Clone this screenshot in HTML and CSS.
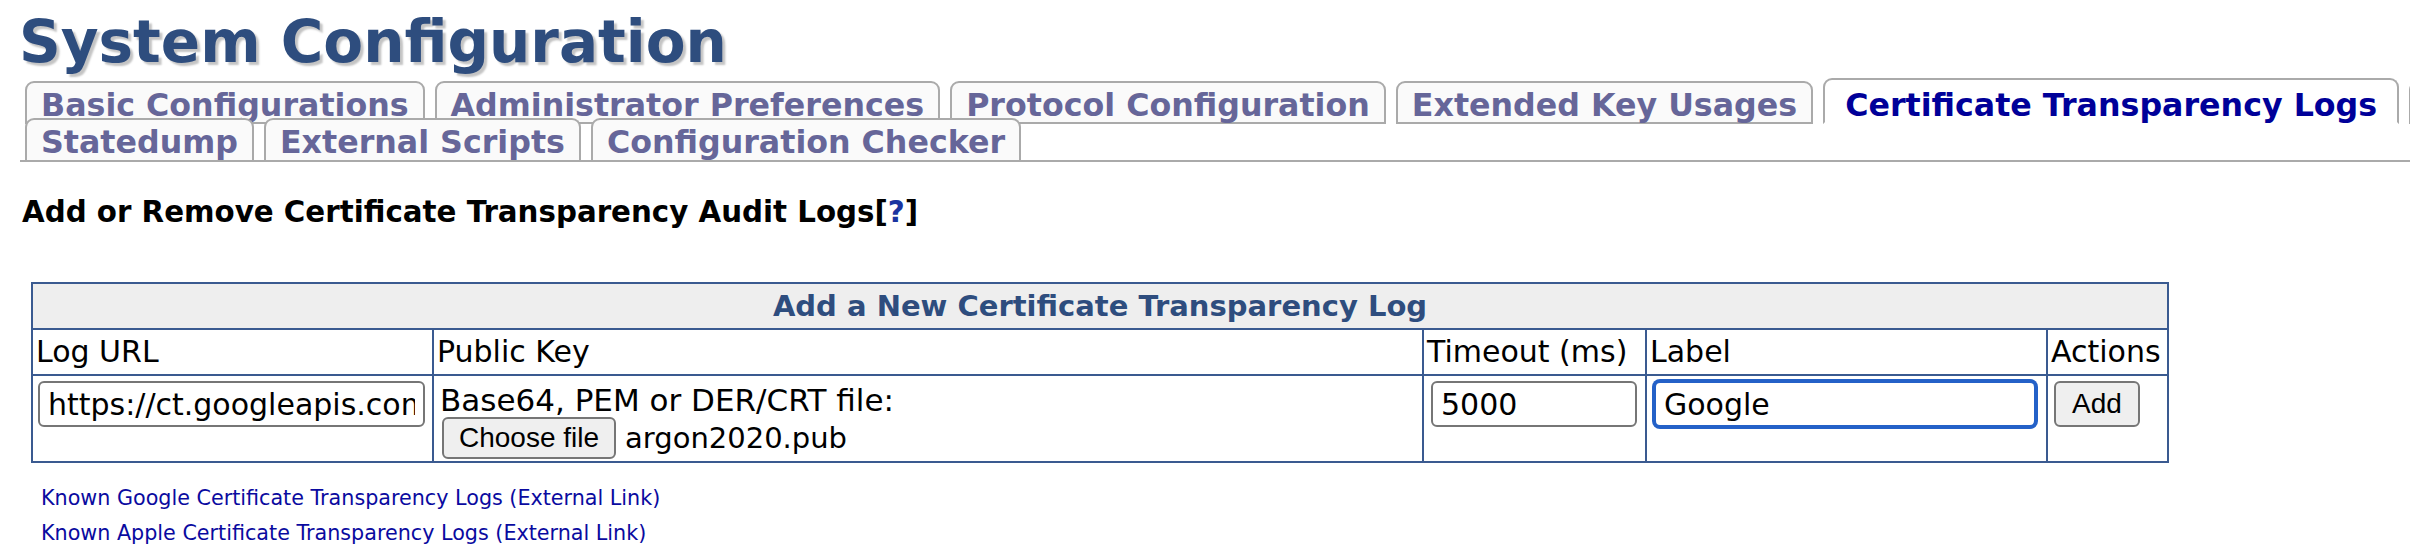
FILE: index.html
```html
<!DOCTYPE html>
<html lang="en">
<head>
<meta charset="utf-8">
<title>System Configuration</title>
<link rel="stylesheet" href="styles.css">
</head>
<body>
<h1 class="title">System Configuration</h1>
<nav class="tabs">
  <div class="tabrow first">
    <a class="tab" href="#">Basic Configurations</a>
    <a class="tab" href="#">Administrator Preferences</a>
    <a class="tab" href="#">Protocol Configuration</a>
    <a class="tab" href="#">Extended Key Usages</a>
    <a class="tab active" href="#">Certificate Transparency Logs</a>
    <a class="tab more" href="#" aria-label="Custom Certificate Extensions"></a>
  </div>
  <div class="tabrow second">
    <a class="tab" href="#">Statedump</a>
    <a class="tab" href="#">External Scripts</a>
    <a class="tab" href="#">Configuration Checker</a>
  </div>
</nav>

<h2 class="section">Add or Remove Certificate Transparency Audit Logs[<a class="help" href="#">?</a>]</h2>

<table class="ctlogs">
  <colgroup>
    <col class="c-url">
    <col class="c-key">
    <col class="c-timeout">
    <col class="c-label">
    <col class="c-actions">
  </colgroup>
  <thead>
    <tr><th class="caption" colspan="5">Add a New Certificate Transparency Log</th></tr>
    <tr class="colheads">
      <th>Log URL</th>
      <th>Public Key</th>
      <th>Timeout (ms)</th>
      <th>Label</th>
      <th>Actions</th>
    </tr>
  </thead>
  <tbody>
    <tr class="datarow">
      <td class="d-url"><input class="field url" type="text" value="https://ct.googleapis.com/logs/argon2020/"></td>
      <td class="d-key">
        <div class="hint">Base64, PEM or DER/CRT file:</div>
        <div class="file"><button class="btn choose" type="button">Choose file</button><span class="fname">argon2020.pub</span></div>
      </td>
      <td class="d-timeout"><input class="field timeout" type="text" value="5000"></td>
      <td class="d-label"><input class="field label focused" type="text" value="Google"></td>
      <td class="d-actions"><button class="btn add" type="button">Add</button></td>
    </tr>
  </tbody>
</table>

<div class="links">
  <a href="#">Known Google Certificate Transparency Logs (External Link)</a>
  <a href="#">Known Apple Certificate Transparency Logs (External Link)</a>
</div>
</body>
</html>
```
FILE: styles.css
```css
html, body {
  overflow: hidden;
}
body {
  margin: 0;
  padding: 6px 0 0 19px;
  font-family: "DejaVu Sans", Verdana, sans-serif;
  color: #000;
  background: #fff;
}

.title {
  margin: 0;
  font-size: 58px;
  line-height: 72px;
  font-weight: bold;
  color: #2e4d7e;
  text-shadow: 3px 3px 2px #c4c4c4;
  white-space: nowrap;
}

.tabs {
  margin-left: 1px;
  padding-left: 5px;
  border-bottom: 2px solid #aaaaaa;
  overflow: hidden;
}
.tabrow {
  display: flex;
  align-items: flex-end;
  gap: 10px;
  white-space: nowrap;
}
.tabrow.second {
  margin-top: -6px;
  position: relative;
}
.tab {
  flex: 0 0 auto;
  display: block;
  border: 2px solid #aaaaaa;
  border-radius: 9px 9px 0 0;
  background: #fafafa;
  color: #666699;
  font-size: 31.7px;
  font-weight: bold;
  line-height: 34px;
  padding: 5px 14px 0;
  text-decoration: none;
}
.tab.active {
  padding: 8px 20px 0;
  background: #fff;
  color: #000099;
  border-bottom-color: #fff;
}
.tab.more {
  width: 300px;
  height: 34px;
}
.tabrow.second .tab {
  border-bottom: 0;
  padding-bottom: 1px;
}

.section {
  margin: 34px 0 0 3px;
  font-size: 29.3px;
  line-height: 32px;
  font-weight: bold;
}
.help {
  color: #1a34a0;
  text-decoration: none;
}

.ctlogs {
  margin: 54px 0 0 12px;
  table-layout: fixed;
  width: 2138px;
  border-collapse: separate;
  border-spacing: 0;
  border-top: 2px solid #3a5a90;
  border-left: 2px solid #3a5a90;
}
.c-url { width: 401px; }
.c-key { width: 990px; }
.c-timeout { width: 223px; }
.c-label { width: 401px; }
.c-actions { width: 121px; }

.ctlogs th,
.ctlogs td {
  box-sizing: border-box;
  border-right: 2px solid #3a5a90;
  border-bottom: 2px solid #3a5a90;
  text-align: left;
  font-weight: normal;
  font-size: 30px;
  vertical-align: top;
}
.ctlogs th.caption {
  text-align: center;
  font-weight: bold;
  font-size: 29px;
  line-height: 44px;
  padding: 0;
  background: #eeeeee;
  color: #2e4d7e;
}
.colheads th {
  line-height: 44px;
  padding: 0 3px;
  white-space: nowrap;
  overflow: hidden;
}
.datarow td {
  padding: 5px 0 0 5px;
  height: 87px;
}
.datarow td.d-key {
  padding: 7px 0 0 6px;
}

.field {
  box-sizing: border-box;
  display: block;
  height: 46px;
  border: 2px solid #767676;
  border-radius: 6px;
  padding: 0 8px;
  font-family: "DejaVu Sans", Verdana, sans-serif;
  font-size: 30px;
  color: #000;
  background: #fff;
  margin: 0;
}
.field.url { width: 387px; }
.field.timeout { width: 206px; margin-left: 2px; }
.field.label { width: 382px; margin-left: 2px; }
.field.focused {
  border-color: #2461c8;
  box-shadow: 0 0 0 2px #2461c8;
  outline: none;
}

.hint {
  font-size: 31px;
  line-height: 34px;
  white-space: nowrap;
}
.file {
  display: flex;
  align-items: center;
  gap: 9px;
}
.btn {
  box-sizing: border-box;
  height: 42px;
  border: 2px solid #767676;
  border-radius: 6px;
  background: #efefef;
  color: #000;
  font-family: "Liberation Sans", Arial, sans-serif;
  font-size: 28px;
  padding: 0 15px;
  margin: 0;
}
.btn.choose {
  margin-left: 2px;
}
.btn.add {
  height: 46px;
  margin-left: 1px;
  padding: 0 16px;
}
.fname {
  font-size: 29px;
}

.links {
  margin: 18px 0 0 22px;
  display: flex;
  flex-direction: column;
  align-items: flex-start;
}
.links a {
  font-size: 20.7px;
  line-height: 35px;
  color: #0a0aa0;
  text-decoration: none;
}
```
